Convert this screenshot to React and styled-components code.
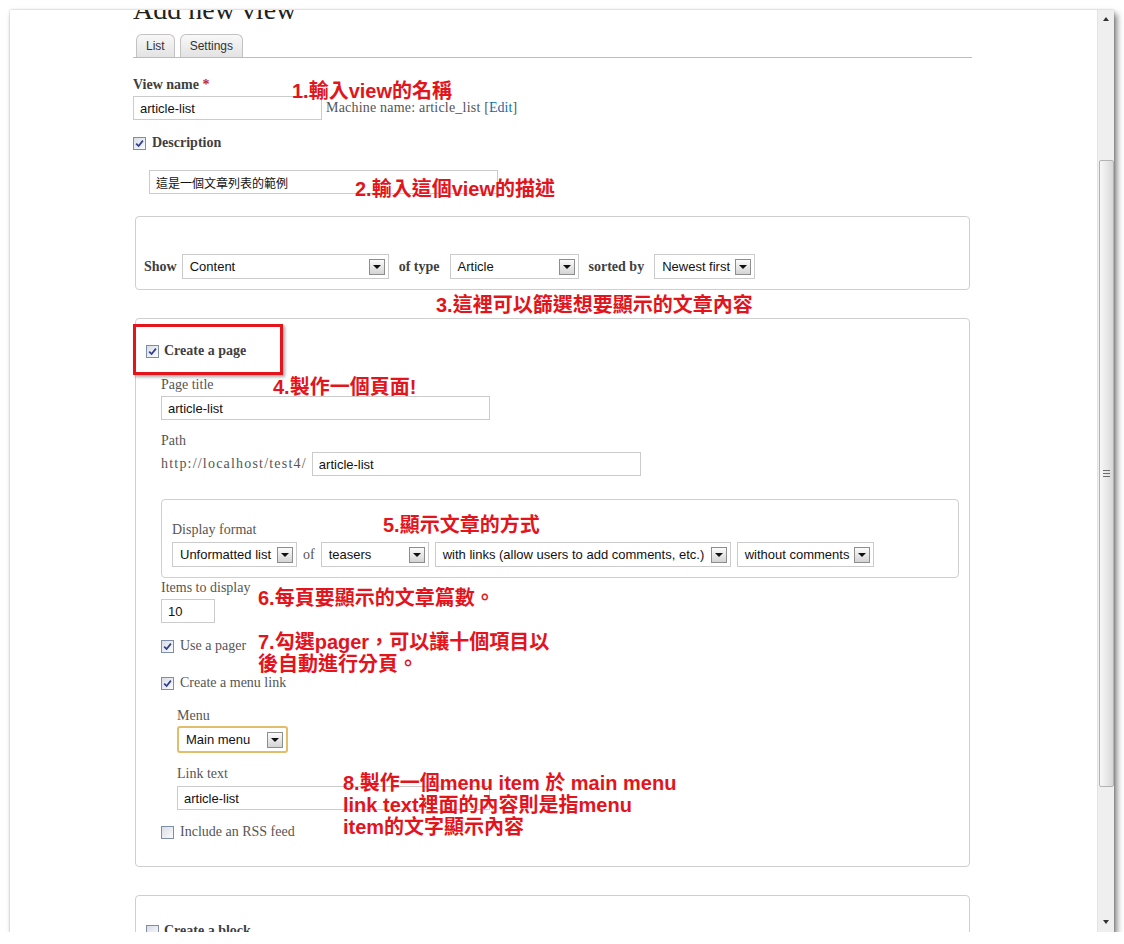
import React from 'react';
import styled, { createGlobalStyle } from 'styled-components';

const GlobalStyle = createGlobalStyle`
  html, body { margin: 0; padding: 0; background: #fff; overflow: hidden; }
  body { font-family: "Liberation Serif", serif; }
`;

const SANS = `"Liberation Sans", "Noto Sans CJK TC", sans-serif`;
const SERIF = `"Liberation Serif", "Noto Sans CJK TC", serif`;

const Window = styled.div`
    margin: 10px 0 0 10px;
    width: 1104px; height: 922px;
    display: flex;
    background: #fff;
    box-shadow: 0 0 2px rgba(0,0,0,0.25), 3px 4px 6px rgba(0,0,0,0.5);
`;

const Content = styled.div`
    flex: 1; position: relative; overflow: hidden;
`;

const Page = styled.div`
    width: 839px; padding-left: 123px;
`;

const Heading = styled.h1`
    margin: -14px 0 0; font: 400 28px/28px ${SERIF}; color: #222;
`;

const Tabs = styled.ul`
    display: flex; align-items: flex-end; gap: 5px;
    margin: 10px 0 0; padding: 0 0 0 3px; list-style: none;
    border-bottom: 1px solid #bcbcbc;
    li{
        box-sizing: border-box; height: 23px; padding: 0 9px;
        border: 1px solid #c2c2c2; border-bottom: 0; border-radius: 6px 6px 0 0;
        background: linear-gradient(#f8f8f8, #e3e3e3);
        font: 12px/22px ${SANS}; color: #333;
    }
`;

const Field = styled.div`
    margin-top: ${p => p.$mt ?? 0}px;
    margin-left: ${p => p.$indent ?? 0}px;
`;

const Label = styled.div`
    margin-bottom: ${p => p.$gap ?? 3}px;
    font: ${p => p.$bold ? 700 : 400} 14px/16px ${SERIF};
    color: ${p => p.$bold ? '#3f3f3f' : '#555'};
    .req{ color: #c1272d; }
`;

const InlineText = styled.span`
    font: ${p => p.$bold ? 700 : 400} 14px/16px ${SERIF};
    color: ${p => p.$bold ? '#3f3f3f' : '#555'};
    margin: 0 ${p => p.$space ?? 0}px;
    letter-spacing: ${p => p.$track ?? 0}px;
    white-space: nowrap;
    a{ color: #0a6fb0; text-decoration: none; letter-spacing: 0; }
`;

const Row = styled.div`
    display: flex; align-items: center; gap: ${p => p.$gap ?? 5}px;
`;

const TextInput = styled.input`
    box-sizing: border-box; width: ${p => p.$w}px; height: 24px;
    border: 1px solid #cbcbcb; padding: 0 6px; margin: 0;
    font: ${p => p.$cjk ? '12px' : '13px'} ${SANS}; color: #111; background: #fff;
    outline: none;
`;

const SelectBox = styled.div`
    box-sizing: border-box; width: ${p => p.$w}px; height: ${p => p.$focus ? 27 : 25}px;
    display: flex; align-items: center; justify-content: space-between;
    padding: 0 3px 0 7px;
    border: ${p => p.$focus ? '2px solid #e2bd6a' : '1px solid #cbcbcb'};
    border-radius: ${p => p.$focus ? 3 : 0}px;
    background: #fff;
    font: 13px/1 ${SANS}; color: #111; white-space: nowrap;
`;

const DropBtn = styled.span`
    box-sizing: border-box; width: 16px; height: 16px; flex: none;
    border: 1px solid #8d8d8d;
    background: linear-gradient(#fbfbfb, #d4d4d4);
    display: flex; align-items: center; justify-content: center;
    &::after{
        content: ''; border-left: 4px solid transparent; border-right: 4px solid transparent;
        border-top: 4px solid #111;
    }
`;

const CheckRow = styled.label`
    display: flex; align-items: center; gap: ${p => p.$gap ?? 6}px;
    margin-top: ${p => p.$mt ?? 0}px;
    margin-left: ${p => p.$indent ?? 0}px;
`;

const Box = styled.span`
    box-sizing: border-box; width: 13px; height: 13px; flex: none;
    border: 1px solid #7e8ea8;
    background: linear-gradient(135deg, #d9dde5, #fbfbfb);
    display: flex; align-items: center; justify-content: center;
`;

const Fieldset = styled.div`
    margin: ${p => p.$mt ?? 0}px ${p => p.$side ?? 0}px 0;
    border: 1px solid #cfcfcf; border-radius: 4px;
    padding: ${p => p.$pad};
`;

const Note = styled.div`
    position: absolute; left: ${p => p.$x}px; top: ${p => p.$y}px;
    font: 700 20px/22px ${SANS}; color: #e3141b;
    white-space: nowrap;
`;

const Highlight = styled.div`
    position: absolute; left: 123px; top: 314px;
    box-sizing: border-box; width: 150px; height: 51px;
    border: 3px solid #e3141b;
    box-shadow: 2px 2px 3px rgba(0,0,0,0.35);
`;

const Scrollbar = styled.div`
    width: 17px; flex: none; box-sizing: border-box;
    background: #efefef; border-left: 1px solid #e4e4e4;
    display: flex; flex-direction: column; align-items: center;
    padding: 7px 0 8px;
`;

const Arrow = styled.span`
    width: 0; height: 0;
    border-left: 3px solid transparent; border-right: 3px solid transparent;
    ${p => p.$down ? 'border-top: 4px solid #333; margin-top: auto;' : 'border-bottom: 4px solid #333;'}
`;

const Thumb = styled.div`
    box-sizing: border-box; width: 15px; height: 627px; margin-top: 139px;
    border: 1px solid #b3b3b3; border-radius: 2px;
    background: linear-gradient(90deg, #f7f7f7, #e6e6e6 60%, #d6d6d6);
    display: flex; align-items: center; justify-content: center;
    &::after{
        content: ''; width: 7px; height: 7px;
        background: repeating-linear-gradient(#6d6d6d 0 1px, transparent 1px 3px);
    }
`;

function Checkbox({ checked, children, bold, ...rest }) {
    return (
        <CheckRow {...rest}>
            <Box>
                {checked && (
                    <svg width="9" height="9" viewBox="0 0 9 9">
                        <path d="M1.2 4.6 L3.6 7 L7.9 1.6" fill="none" stroke="#2d3d93" strokeWidth="1.7" />
                    </svg>
                )}
            </Box>
            <InlineText $bold={bold}>{children}</InlineText>
        </CheckRow>
    );
}

function Select({ w, focus, children }) {
    return (
        <SelectBox $w={w} $focus={focus}>
            <span>{children}</span>
            <DropBtn />
        </SelectBox>
    );
}

function App() {
    return (
        <>
            <GlobalStyle />
            <Window>
                <Content>
                    <Page>
                        <Heading>Add new view</Heading>
                        <Tabs>
                            <li>List</li>
                            <li>Settings</li>
                        </Tabs>

                        <Field $mt={19}>
                            <Label $bold>View name <span className="req">*</span></Label>
                            <Row $gap={4}>
                                <TextInput $w={189} readOnly value="article-list" />
                                <InlineText $track={0.2}>Machine name: article_list [<a href="#!">Edit</a>]</InlineText>
                            </Row>
                        </Field>

                        <Checkbox checked bold $mt={15}>Description</Checkbox>
                        <Field $mt={19} $indent={16}>
                            <TextInput $w={349} $cjk readOnly value="這是一個文章列表的範例" />
                        </Field>

                        <Fieldset $mt={22} $side={2} $pad="37px 8px 10px">
                            <Row $gap={5}>
                                <InlineText $bold>Show</InlineText>
                                <Select w={207}>Content</Select>
                                <InlineText $bold $space={5}>of type</InlineText>
                                <Select w={129}>Article</Select>
                                <InlineText $bold $space={5}>sorted by</InlineText>
                                <Select w={101}>Newest first</Select>
                            </Row>
                        </Fieldset>

                        <Fieldset $mt={28} $side={2} $pad="24px 10px 26px">
                            <Checkbox checked bold $gap={5}>Create a page</Checkbox>
                            <Field $indent={15}>
                                <Field $mt={18}>
                                    <Label>Page title</Label>
                                    <TextInput $w={329} readOnly value="article-list" />
                                </Field>
                                <Field $mt={13}>
                                    <Label>Path</Label>
                                    <Row $gap={5}>
                                        <InlineText $track={1.2}>http://localhost/test4/</InlineText>
                                        <TextInput $w={329} readOnly value="article-list" />
                                    </Row>
                                </Field>

                                <Fieldset $mt={23} $pad="22px 10px 10px 10px">
                                    <Label $gap={4}>Display format</Label>
                                    <Row $gap={6}>
                                        <Select w={125}>Unformatted list</Select>
                                        <InlineText>of</InlineText>
                                        <Select w={108}>teasers</Select>
                                        <Select w={296}>with links (allow users to add comments, etc.)</Select>
                                        <Select w={137}>without comments</Select>
                                    </Row>
                                </Fieldset>

                                <Field $mt={2}>
                                    <Label>Items to display</Label>
                                    <TextInput $w={54} readOnly value="10" />
                                </Field>

                                <Checkbox checked $mt={15}>Use a pager</Checkbox>
                                <Checkbox checked $mt={21}>Create a menu link</Checkbox>

                                <Field $indent={16}>
                                    <Field $mt={17}>
                                        <Label $gap={2}>Menu</Label>
                                        <Select w={111} focus>Main menu</Select>
                                    </Field>
                                    <Field $mt={13}>
                                        <Label $gap={4}>Link text</Label>
                                        <TextInput $w={313} readOnly value="article-list" />
                                    </Field>
                                </Field>

                                <Checkbox $mt={14}>Include an RSS feed</Checkbox>
                            </Field>
                        </Fieldset>

                        <Fieldset $mt={28} $side={2} $pad="27px 10px 20px">
                            <Checkbox bold $gap={5}>Create a block</Checkbox>
                        </Fieldset>
                    </Page>

                    <Highlight />
                    <Note $x={282} $y={70}>1.輸入view的名稱</Note>
                    <Note $x={345} $y={168}>2.輸入這個view的描述</Note>
                    <Note $x={426} $y={284}>3.這裡可以篩選想要顯示的文章內容</Note>
                    <Note $x={263} $y={366}>4.製作一個頁面!</Note>
                    <Note $x={373} $y={504}>5.顯示文章的方式</Note>
                    <Note $x={248} $y={577}>6.每頁要顯示的文章篇數。</Note>
                    <Note $x={248} $y={621}>7.勾選pager，可以讓十個項目以<br />後自動進行分頁。</Note>
                    <Note $x={333} $y={762}>8.製作一個menu item 於 main menu<br />link text裡面的內容則是指menu<br />item的文字顯示內容</Note>
                </Content>
                <Scrollbar>
                    <Arrow />
                    <Thumb />
                    <Arrow $down />
                </Scrollbar>
            </Window>
        </>
    );
}

export default App;
